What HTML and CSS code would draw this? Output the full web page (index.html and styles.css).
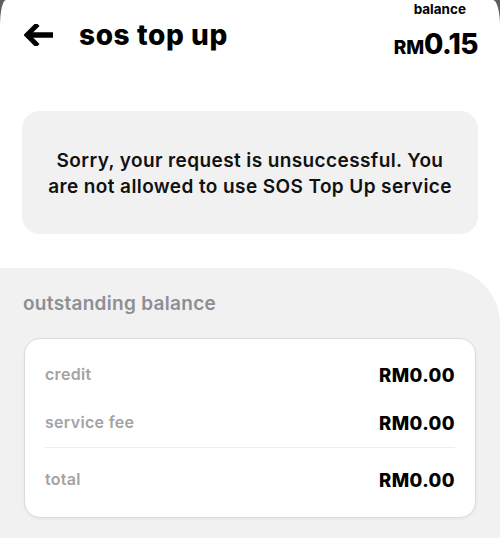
FILE: index.html
```html
<!DOCTYPE html>
<html lang="en">
  <head>
    <meta charset="UTF-8" />
    <meta name="viewport" content="width=device-width, initial-scale=1.0" />
    <title>SOS Top Up</title>
    <link rel="stylesheet" href="styles.css">
  </head>
  <body>
    <div class="screen">
      <div class="header">
        <div class="title-wrap">
          <svg class="back" width="30" height="22" viewBox="0 0 30 22">
            <path d="M12 2 L3 11 L12 20" fill="none" stroke="#000" stroke-width="5" stroke-linecap="square" stroke-linejoin="miter" />
            <path d="M5 11 H29" stroke="#000" stroke-width="5.5" />
          </svg>
          <h1>sos top up</h1>
        </div>
        <div class="balance">
          <span class="balance-label">balance</span>
          <span class="balance-amount"><small>RM</small>0.15</span>
        </div>
      </div>

      <div class="message">
        Sorry, your request is unsuccessful. You<br />
        are not allowed to use SOS Top Up service
      </div>

      <div class="outstanding">
        <h2>outstanding balance</h2>
        <div class="card">
          <div class="row">
            <span class="label">credit</span>
            <span class="value">RM0.00</span>
          </div>
          <div class="row">
            <span class="label">service fee</span>
            <span class="value">RM0.00</span>
          </div>
          <div class="row total">
            <span class="label">total</span>
            <span class="value">RM0.00</span>
          </div>
        </div>
      </div>
    </div>
  </body>
</html>
```

FILE: styles.css
```css
body {
  margin: 0;
  background: #5e5e5e;
  font-family: Inter, "Open Sans", sans-serif;
}

.screen {
  background: #fff;
  min-height: 538px;
  border-radius: 6px 7px 0 0 / 26px 26px 0 0;
  overflow: hidden;
}

.header {
  display: flex;
  justify-content: space-between;
  padding: 0 22px 0 24px;
  height: 111px;
}

.title-wrap {
  display: flex;
  align-items: center;
  gap: 25px;
  height: 69px;
}

.back {
  display: block;
}

h1 {
  margin: 0;
  font-size: 28px;
  font-weight: 800;
  color: #000;
  letter-spacing: 0.6px;
}

.balance {
  display: flex;
  flex-direction: column;
  align-items: flex-end;
}

.balance-label {
  font-size: 13.5px;
  font-weight: 700;
  margin-top: 1px;
  margin-right: 12px;
}

.balance-amount {
  font-size: 28px;
  font-weight: 800;
  margin-top: 10px;
  letter-spacing: -0.6px;
}

.balance-amount small {
  font-size: 19px;
  letter-spacing: -0.2px;
}

.message {
  margin: 0 22px;
  height: 123px;
  border-radius: 18px;
  background: #f1f1f1;
  display: flex;
  align-items: center;
  justify-content: center;
  text-align: center;
  font-size: 19px;
  font-weight: 600;
  line-height: 26px;
  letter-spacing: 0.4px;
  color: #111;
  padding-top: 2px;
  box-sizing: border-box;
}

.outstanding {
  margin-top: 34px;
  background: #f1f1f1;
  border-top-right-radius: 56px;
  padding: 24px 24px 30px 24px;
}

h2 {
  margin: 0 0 0 -1px;
  font-size: 19px;
  font-weight: 600;
  color: #8e8e93;
  letter-spacing: 0.3px;
}

.card {
  margin-top: 23px;
  background: #fff;
  border: 1px solid #dcdcdc;
  border-radius: 16px;
  box-shadow: 0 1px 3px rgba(0, 0, 0, 0.06);
  padding: 12px 20px 5px 20px;
}

.row {
  display: flex;
  justify-content: space-between;
  align-items: center;
  height: 48px;
}

.row.total {
  border-top: 1px solid #ececec;
  height: 64px;
}

.label {
  font-size: 16px;
  font-weight: 600;
  color: #a3a3a3;
  margin-top: -2px;
  letter-spacing: 0.3px;
}

.value {
  font-size: 18.5px;
  font-weight: 800;
  color: #000;
  letter-spacing: 0.4px;
}
```
